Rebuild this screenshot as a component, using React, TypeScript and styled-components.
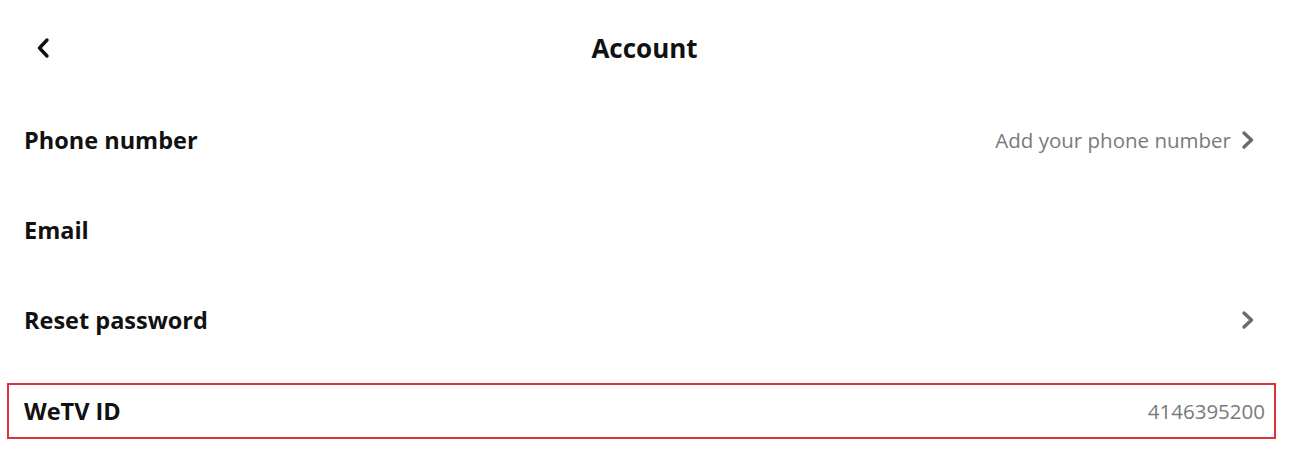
import styled, { createGlobalStyle } from "styled-components";

const GlobalStyle = createGlobalStyle`
  body {
    margin: 0;
    background: #fff;
    font-family: "Open Sans", "Liberation Sans", sans-serif;
    color: #111;
  }
`

const Page = styled.div`
  width: 1289px;
  height: 454px;
  overflow: hidden;
`

const Header = styled.div`
  position: relative;
  height: 95px;
  display: flex;
  align-items: center;
  justify-content: center;
`

const BackButton = styled.button`
  position: absolute;
  left: 31px;
  top: 34px;
  width: 24px;
  height: 28px;
  padding: 0;
  border: none;
  background: none;
  display: flex;
  align-items: center;
  justify-content: center;
`

const Title = styled.h1`
  margin: 0;
  font-size: 26px;
  font-weight: 700;
`

const List = styled.div`
  display: flex;
  flex-direction: column;
`

interface RowProps {
  $highlight?: boolean;
}

const Row = styled.div<RowProps>`
  height: 90px;
  display: flex;
  align-items: center;
  justify-content: space-between;
  padding: 0 34px 0 24px;
  box-sizing: border-box;
  ${(p) => p.$highlight && `
    height: 56px;
    margin: 18px 13px 16px 7px;
    padding: 0 9px 0 15px;
    border: 2px solid #d9323b;
  `}
`

const Label = styled.span`
  font-size: 23.5px;
  font-weight: 700;
  color: #111;
`

const Side = styled.div`
  display: flex;
  align-items: center;
  gap: 10px;
`

const Value = styled.span`
  font-size: 20.5px;
  color: #7a7a7a;
`

const Chevron = ({ color = "#6b6b6b", left = false }: { color?: string; left?: boolean }) => (
  <svg width="14" height="22" viewBox="0 0 14 22">
    <polyline
      points={left ? "11,3 3.5,11 11,19" : "3,4 10.5,11 3,18"}
      fill="none"
      stroke={color}
      strokeWidth="3.4"
      strokeLinecap="round"
      strokeLinejoin="round"
    />
  </svg>
)

const rows = [
  { label: "Phone number", value: "Add your phone number", arrow: true },
  { label: "Email", value: "", arrow: false },
  { label: "Reset password", value: "", arrow: true },
]

const App = () => {
  return (
    <Page>
      <GlobalStyle />
      <Header>
        <BackButton>
          <Chevron left color="#111" />
        </BackButton>
        <Title>Account</Title>
      </Header>
      <List>
        {rows.map((r) => (
          <Row key={r.label}>
            <Label>{r.label}</Label>
            <Side>
              {r.value && <Value>{r.value}</Value>}
              {r.arrow && <Chevron />}
            </Side>
          </Row>
        ))}
        <Row $highlight>
          <Label>WeTV ID</Label>
          <Value>4146395200</Value>
        </Row>
      </List>
    </Page>
  )
}

export default App
